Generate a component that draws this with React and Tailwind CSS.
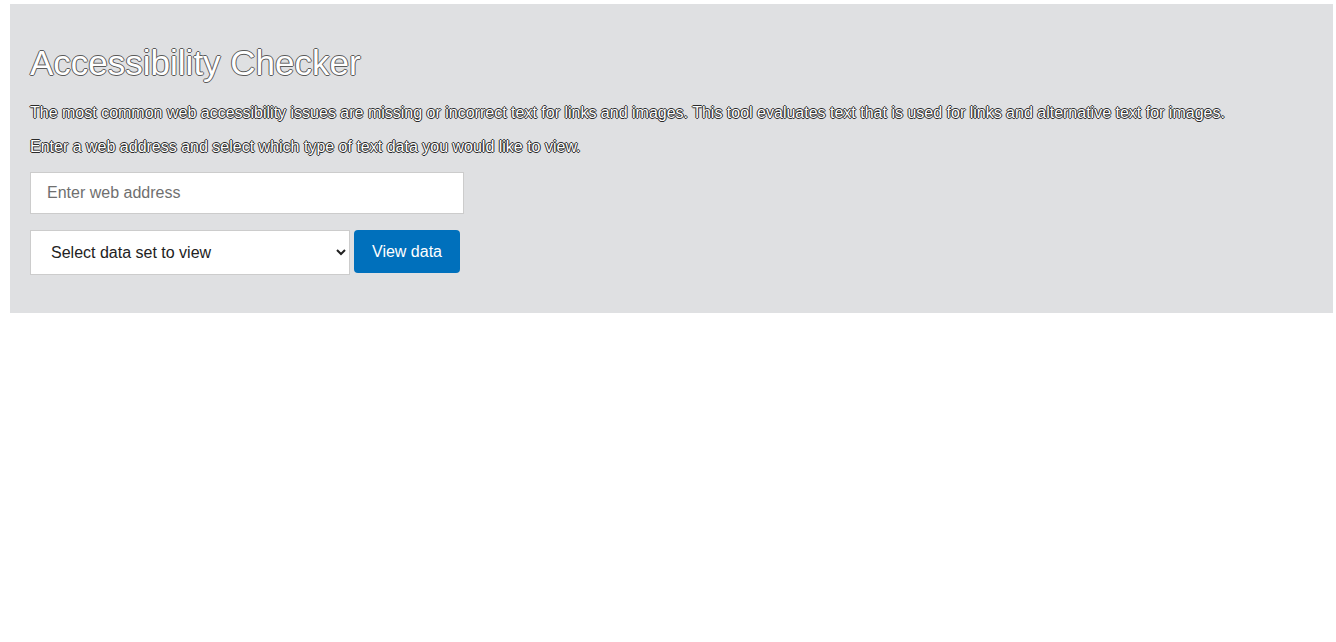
export default function App() {
  return (
    <div className="min-h-screen bg-white pt-1 pl-[10px] pr-[3px] font-['Liberation_Sans',Arial,sans-serif]">
      <div className="bg-[#dfe0e2] px-5 pt-[39px] pb-[38px]">
        <h1 className="text-[35px] leading-10 text-white [text-shadow:-1px_0_#5a5a5a,1px_0_#5a5a5a,0_-1px_#5a5a5a,0_1px_#5a5a5a]">
          Accessibility Checker
        </h1>
        <p className="mt-5 text-base leading-5 text-white [text-shadow:-1px_0_#2a2a2a,1px_0_#2a2a2a,0_-1px_#2a2a2a,0_1px_#2a2a2a]">
          The most common web accessibility issues are missing or incorrect text for links and images. This tool evaluates text that is used for links and alternative text for images.
        </p>
        <p className="mt-[14px] text-base leading-5 text-white [text-shadow:-1px_0_#2a2a2a,1px_0_#2a2a2a,0_-1px_#2a2a2a,0_1px_#2a2a2a]">
          Enter a web address and select which type of text data you would like to view.
        </p>
        <input
          type="text"
          placeholder="Enter web address"
          className="mt-[15px] block h-[42px] w-[434px] border border-[#cccccc] bg-white px-4 text-base text-[#222] placeholder:text-[#6f6f6f] outline-none"
        />
        <div className="mt-4 flex items-start gap-1">
          <select className="h-[45px] w-[320px] border border-[#cccccc] bg-white pl-4 pr-2 text-base text-[#222]">
            <option>Select data set to view</option>
            <option>Link text</option>
            <option>Image alternative text</option>
          </select>
          <button className="h-[43px] rounded bg-[#0070bc] px-[18px] text-base text-white">
            View data
          </button>
        </div>
      </div>
    </div>
  );
}
